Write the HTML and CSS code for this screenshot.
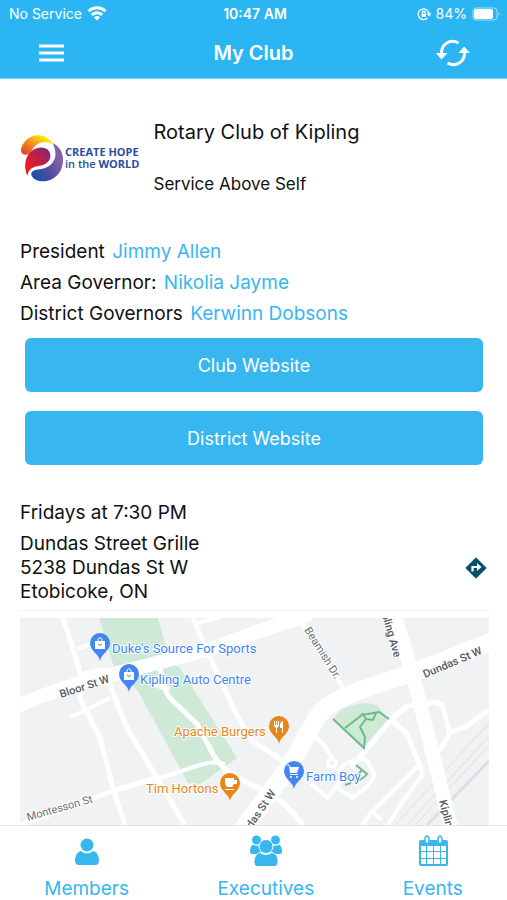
FILE: index.html
```html
<!DOCTYPE html>
<html lang="en">
<head>
    <meta charset="UTF-8">
    <meta name="viewport" content="width=device-width, initial-scale=1.0">
    <title>My Club</title>
    <link rel="stylesheet" href="styles.css">
</head>
<body>
    <header class="header">
        <div class="status-bar">
            <div class="status-left">
                <span>No Service</span>
                <svg width="20" height="15" viewBox="0 0 20 15" fill="none" stroke="#fff" stroke-width="3">
                    <path d="M1.500 5.300a12 12 0 0 1 17 0M4.800 8.800a7.500 7.500 0 0 1 10.400 0"/>
                    <path d="M10 14.500l-3-3a4.400 4.400 0 0 1 6 0z" fill="#fff" stroke="none"/>
                </svg>
            </div>
            <span class="status-time">10:47 AM</span>
            <div class="status-right">
                <svg width="14" height="14" viewBox="0 0 14 14" fill="none" stroke="#fff" stroke-width="1.300">
                    <path d="M10.500 10.700a5.300 5.300 0 1 1 1.300-3.500M10 6.500l2 2 1.700-2.300"/>
                    <path d="M4.500 6.500h4.500v3.300H4.500z" fill="#fff" stroke="none"/>
                    <path d="M5.400 6.500V5.400a1.300 1.300 0 0 1 2.700 0v1.100"/>
                </svg>
                <span>84%</span>
                <svg width="29" height="14" viewBox="0 0 29 14">
                    <rect x="1" y="1" width="24" height="12" rx="3" fill="none" stroke="#a5e0fb"/>
                    <rect x="2" y="2" width="19" height="10" rx="2" fill="#fff"/>
                    <path d="M26.500 5q2 2 0 4z" fill="#a5e0fb"/>
                </svg>
            </div>
        </div>
        <div class="title-bar">
            <button class="icon-btn" aria-label="Menu">
                <svg width="25" height="18" viewBox="0 0 25 18" stroke="#fff" stroke-width="3">
                    <path d="M0 2h25M0 9h25M0 16h25"/>
                </svg>
            </button>
            <h1>My Club</h1>
            <button class="icon-btn" aria-label="Refresh">
                <svg width="34" height="28" viewBox="0 0 34 28" fill="none" stroke="#fff" stroke-width="3">
                    <path d="M22.500 4C14-.5 5.500 5 5.500 14"/>
                    <path d="M11.500 24C20 28.500 28.500 23 28.500 14"/>
                    <path d="M0 14h11.500l-6 6.500zM22.500 14H34l-6-6.500z" fill="#fff" stroke="none"/>
                </svg>
            </button>
        </div>
    </header>

    <main class="content">
        <section class="club">
            <div class="club-logo">
                <svg width="43" height="48" viewBox="25 72 130 143">
                    <defs>
                        <linearGradient id="sun" x1="0" y1="1" x2="1" y2="0">
                            <stop offset="0" stop-color="#e5352b"/>
                            <stop offset="0.500" stop-color="#f7941e"/>
                            <stop offset="0.800" stop-color="#fde800"/>
                        </linearGradient>
                        <linearGradient id="drop" x1="0" y1="1" x2="1" y2="0">
                            <stop offset="0.200" stop-color="#ee1c25"/>
                            <stop offset="0.550" stop-color="#c01f45"/>
                            <stop offset="1" stop-color="#6c2c88"/>
                        </linearGradient>
                        <linearGradient id="wave" x1="1" y1="0" x2="0" y2="1">
                            <stop offset="0.300" stop-color="#8161a8"/>
                            <stop offset="0.600" stop-color="#504ea0"/>
                            <stop offset="1" stop-color="#0753a5"/>
                        </linearGradient>
                    </defs>
                    <path fill="url(#sun)" d="M43 134C29 134 24 122 30 110 39 88 60 73 82 75c20 1 36 13 42 28-17-12-38-9-52 3-12 11-14 27-29 28z"/>
                    <path fill="url(#drop)" d="M48 198C37 178 38 147 53 129c16-20 48-24 60-6 11 19-2 39-24 43-22 3-40 9-41 32z"/>
                    <path fill="url(#wave)" d="M124 98c29 14 39 49 25 81-15 33-57 43-79 29-19-13-12-29 9-30 28 0 50-18 53-42 1-15-3-27-8-38z"/>
                </svg>
                <p>CREATE HOPE<br><span>in the</span> WORLD</p>
            </div>
            <div class="club-name">
                <h2>Rotary Club of Kipling</h2>
                <p>Service Above Self</p>
            </div>
        </section>

        <section class="officers">
            <p>President <a href="#">Jimmy Allen</a></p>
            <p>Area Governor: <a href="#">Nikolia Jayme</a></p>
            <p>District Governors <a href="#">Kerwinn Dobsons</a></p>
        </section>

        <div class="buttons">
            <button class="site-btn">Club Website</button>
            <button class="site-btn">District Website</button>
        </div>

        <section class="meeting">
            <p class="when">Fridays at 7:30 PM</p>
            <div class="where">
                <address>Dundas Street Grille<br>5238 Dundas St W<br>Etobicoke, ON</address>
                <a href="#" class="directions" aria-label="Directions">
                    <svg width="22" height="22" viewBox="0 0 22 22">
                        <path d="M11 .8L21.200 11 11 21.200.8 11z" fill="#07506c" stroke="#07506c" stroke-linejoin="round"/>
                        <path d="M7.500 14.500V10H13" fill="none" stroke="#fff" stroke-width="2.200"/>
                        <path d="M12 6l4.500 4-4.500 4z" fill="#fff"/>
                    </svg>
                </a>
            </div>
        </section>

        <div class="map">
            <svg viewBox="0 0 469 207" preserveAspectRatio="xMidYMid slice" role="img" aria-label="Map of the meeting place">
                <defs>
                    <path id="pin" d="M0 0C-1-7-10-10-10-18a10 10 0 0 1 20 0C10-10 1-7 0 0z"/>
                </defs>
                <rect width="469" height="207" fill="#f0f2f3"/>
                <path class="park" d="M79 0h59l12 43 10 7 57 90-37 26-12-1-50-92-25-27z"/>
                <path class="park" d="M313 101l8-9q18-10 36-5l11 14-25 29z"/>

                <!-- railway -->
                <g class="rail">
                    <path d="M469 105L375 207M469 118L387 207M469 128L395 207"/>
                    <path class="rail-wide" d="M469 143L407 207"/>
                </g>

                <!-- side streets -->
                <g class="road thin">
                    <path d="M57 31l23-8M50 99l14-6 26-13M63 56l15-4h12M175 6l28-8M140 160l43-14q10-3 22 0"/>
                    <path d="M130 62q10 10 20 8"/>
                    <path d="M292 116l11 10 9 14M285 160q10 10 23 20l12-17M400 146L350 196l-8 11M403 156L385 180l-17 27M350 192l12 10M318 152l11-8"/>
                    <path d="M329 144q14-6 19 0l6 12q0 6-8 13l-13 11-15-10"/>
                    <circle cx="312" cy="145" r="4"/>
                </g>
                <g class="road">
                    <path d="M43 0l19 60-2 21 20 39 13 50 12 37"/>
                    <path d="M88 62l19 48 30 50 28 47"/>
                    <path d="M173 0l14 33 20 43q10 25 26 47l30 20"/>
                    <path d="M140 46q2 24 10 34l27 26 16 30q10 20 47 34 22 10 43 37"/>
                    <path d="M0 207l93-34 47-14"/>
                    <path d="M283 6l44 70"/>
                    <path d="M331 149l42-49 14-12 18-2q16-5 19 6 3 12 5 20 0 10-14 24M427 116l20-8 22-16M373 103l14 13 13 32 3 8"/>
                </g>

                <!-- main roads -->
                <path class="road bloor" d="M-5 89Q35 71 90 57L187 32 240 13 290-4"/>
                <path class="road dundas" d="M480 20L390 56q-50 15-70 25-20 10-27 25-18 34-32 54L222 212"/>
                <path class="road kipling" d="M374-4q14 43 22 74l16 63 20 80"/>

                <g class="trail">
                    <path d="M313 101l31 29 1-11-5-10 6-8-4-6M325 110l17-13 17-3 10 7M346 101l7 1 3-7"/>
                    <path d="M336 147l11 9q-4 5-12 8M342 152l-5 6M325 167l6-2"/>
                </g>

                <g class="street-name">
                    <text x="41" y="80" transform="rotate(-18 41 80)">Bloor St W</text>
                    <text class="minor" x="8" y="203" transform="rotate(-16 8 203)">Montesson St</text>
                    <text class="minor" x="284" y="12" transform="rotate(58 284 12)">Beamish Dr.</text>
                    <text x="359" y="-13" transform="rotate(74 359 -13)">Kipling Ave</text>
                    <text x="405" y="60" transform="rotate(-23 405 60)">Dundas St W</text>
                    <text x="221" y="227" transform="rotate(-56 221 227)">Dundas St W</text>
                    <text x="419" y="183" transform="rotate(75 419 183)">Kipling Ave</text>
                </g>

                <g class="place shop">
                    <use href="#pin" x="80" y="43"/>
                    <use href="#pin" x="109" y="74"/>
                    <use href="#pin" x="274" y="171"/>
                    <text x="92" y="35">Duke's Source For Sports</text>
                    <text x="120" y="66">Kipling Auto Centre</text>
                    <text x="286" y="163">Farm Boy</text>
                </g>
                <g class="place food">
                    <use href="#pin" x="259" y="126"/>
                    <use href="#pin" x="210" y="183"/>
                    <text x="154" y="118">Apache Burgers</text>
                    <text x="126" y="175">Tim Hortons</text>
                </g>

                <!-- pin glyphs -->
                <g fill="#fff">
                    <path d="M75 23h10v8H75zM104 54h10v8h-10z"/>
                    <path d="M205 160h9v2h3v4h-3l-2 3h-5l-2-3zM205 171h9v1h-9z"/>
                    <path d="M269 149h10l-2 6h-7zM270 156h8v1h-8z"/>
                    <circle cx="271" cy="159" r="1"/>
                    <circle cx="277" cy="159" r="1"/>
                    <path d="M254 103h1v4h1v-4h1v4h1v-4h1v5l-2 2v5h-1v-5l-2-2zM263 103v12h-1v-5h-2v-4q1-3 3-3z"/>
                </g>
                <g fill="none" stroke="#fff">
                    <path d="M78 23v-2q2-3 4 0v2M107 54v-2q2-3 4 0v2M267 147h2l1 2"/>
                    <path class="smile" d="M78 26q2 3 4 0M107 57q2 3 4 0"/>
                </g>
            </svg>
        </div>
    </main>

    <nav class="tab-bar">
        <a href="#">
            <svg width="34" height="34" viewBox="0 0 34 34" fill="currentColor">
                <circle cx="17" cy="11" r="6.500"/>
                <path d="M11 17q6 5 12 0c4 1 6 5 6 10q0 4-4 4H9q-4 0-4-4c0-5 2-9 6-10z"/>
            </svg>
            Members
        </a>
        <a href="#">
            <svg width="34" height="34" viewBox="0 0 34 34" fill="currentColor">
                <circle cx="7.500" cy="6" r="4.500"/>
                <circle cx="26.500" cy="6" r="4.500"/>
                <path d="M4 10.500q4 2.500 8 0V20H3q-2 0-2-2 0-6 3-7.500zM30 10.500q-4 2.500-8 0V20h9q2 0 2-2 0-6-3-7.500z"/>
                <g stroke="#fff">
                    <path d="M11 18.500q6 4 12 0c4 1 6 4 6 9 0 4-2 5-4 5H9c-2 0-4-1-4-5s2-8 6-9z"/>
                    <circle cx="17" cy="12.500" r="7"/>
                </g>
            </svg>
            Executives
        </a>
        <a href="#">
            <svg width="34" height="34" viewBox="0 0 34 34">
                <rect x="3" y="6" width="29" height="26" rx="2" fill="currentColor"/>
                <path fill="#fff" d="M5 12h5v5H5zM11 12h6v5h-6zM18 12h6v5h-6zM25 12h5v5h-5zM5 18h5v6H5zM11 18h6v6h-6zM18 18h6v6h-6zM25 18h5v6h-5zM5 25h5v5H5zM11 25h6v5h-6zM18 25h6v5h-6zM25 25h5v5h-5z"/>
                <path fill="#fff" stroke="currentColor" stroke-width="1.500" d="M9 8V4q2-4 4 0v4q-2 3-4 0zM22 8V4q2-4 4 0v4q-2 3-4 0z"/>
            </svg>
            Events
        </a>
    </nav>
</body>
</html>
```
FILE: styles.css
```css
* {
    margin: 0;
    padding: 0;
    box-sizing: border-box;
}

body {
    min-height: 100vh;
    display: flex;
    flex-direction: column;
    background-color: #fff;
    color: #111;
    font-family: Inter, Roboto, sans-serif;
    font-size: 19px;
}

a {
    color: #38b6ef;
    text-decoration: none;
}

button {
    border: none;
    cursor: pointer;
    font-family: inherit;
}

svg {
    display: block;
    flex-shrink: 0;
}

.header {
    background-color: #2bb6f3;
    color: #fff;
    border-bottom: 1px solid #6fcdf6;
}

.status-bar,
.title-bar {
    display: grid;
    grid-template-columns: 1fr auto 1fr;
    align-items: center;
}

.status-bar {
    height: 27px;
    padding: 0 6px 0 9px;
    font-size: 14px;
}

.status-left,
.status-right {
    display: flex;
    align-items: center;
    gap: 5px;
}

.status-right {
    justify-content: flex-end;
}

.status-time {
    font-weight: 600;
}

.title-bar {
    height: 51px;
    padding: 0 37px;
}

.title-bar h1 {
    font-size: 20px;
    font-weight: 600;
}

.icon-btn {
    justify-self: start;
    padding: 2px;
    background: none;
}

.icon-btn:last-child {
    justify-self: end;
    padding: 0;
}

.content {
    flex: 1;
    display: flex;
    flex-direction: column;
    padding: 0 18px 0 20px;
}

.club {
    display: flex;
    align-items: center;
    gap: 14px;
    padding: 40px 0 39px;
}

.club-logo {
    display: flex;
    align-items: center;
    gap: 2px;
    color: #2a4f9e;
    font: 700 11px/12px "Open Sans", sans-serif;
    white-space: nowrap;
}

.club-logo span {
    font-weight: 600;
}

.club-name h2 {
    font-size: 20px;
    font-weight: 400;
    line-height: 26px;
    margin-bottom: 26px;
}

.club-name p {
    font-size: 17px;
    line-height: 26px;
}

.officers {
    line-height: 31px;
}

.officers a {
    margin-left: 2px;
}

.buttons {
    display: flex;
    flex-direction: column;
    gap: 19px;
    padding: 9px 6px 32px 5px;
}

.site-btn {
    height: 54px;
    border-radius: 6px;
    background-color: #38b6ef;
    color: #fff;
    font-size: 18px;
}

.when {
    line-height: 31px;
    margin-bottom: 4px;
}

.where {
    display: flex;
    align-items: center;
    justify-content: space-between;
    padding: 0 2px 6px 0;
    border-bottom: 1px solid #f2f2f2;
}

.where address {
    font-style: normal;
    line-height: 24px;
}

.map {
    flex: 1;
    display: flex;
    min-height: 200px;
    margin-top: 7px;
}

.map svg {
    width: 100%;
    height: auto;
    min-height: 100%;
}

.park {
    fill: #ceead6;
}

.rail {
    fill: none;
    stroke: #dcdfe1;
    stroke-width: 1;
}

.rail-wide {
    stroke-width: 3;
}

.road {
    fill: none;
    stroke: #fff;
    stroke-width: 5;
    stroke-linejoin: round;
}

.thin {
    stroke-width: 4;
}

.bloor {
    stroke-width: 14;
}

.dundas {
    stroke-width: 18;
}

.kipling {
    stroke-width: 14;
}

.trail {
    fill: none;
    stroke: #6dbb8a;
    stroke-width: 2;
}

.smile {
    stroke: #4285f4;
}

.street-name,
.place {
    font-family: Roboto, sans-serif;
    stroke: #fff;
    stroke-width: 2;
    paint-order: stroke;
}

.street-name {
    font-size: 11px;
    font-weight: 500;
    fill: #55595d;
}

.street-name .minor {
    font-weight: 400;
    fill: #6b6f73;
}

.place {
    font-size: 13px;
}

.place use {
    stroke: none;
}

.shop {
    fill: #4285f4;
}

.food {
    fill: #e8861a;
}

.tab-bar {
    position: sticky;
    bottom: 0;
    display: flex;
    justify-content: space-around;
    padding: 8px 0 0;
    height: 76px;
    border-top: 1px solid #e4e4e4;
    background-color: #fff;
}

.tab-bar a {
    display: flex;
    flex-direction: column;
    align-items: center;
    gap: 9px;
    font-size: 19px;
    line-height: 24px;
}
```
